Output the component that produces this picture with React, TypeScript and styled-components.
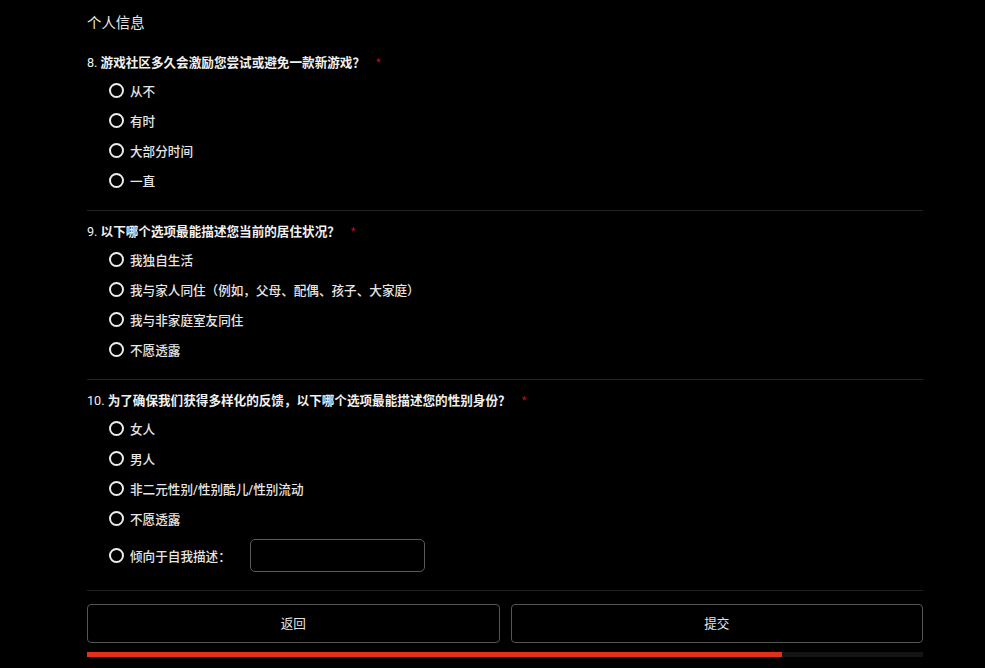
import { useState } from 'react';
import styled, { createGlobalStyle } from 'styled-components';

const GlobalStyle = createGlobalStyle`
	html, body {
		margin: 0;
		padding: 0;
		background: #000;
	}
	body {
		font-family: Roboto, 'Noto Sans CJK SC', sans-serif;
		color: #e4e4e4;
	}
`;

type Question = {
	id: number;
	text: string;
	options: string[];
	custom?: string;
};

const questions: Question[] = [
	{
		id: 8,
		text: '游戏社区多久会激励您尝试或避免一款新游戏？',
		options: ['从不', '有时', '大部分时间', '一直'],
	},
	{
		id: 9,
		text: '以下哪个选项最能描述您当前的居住状况？',
		options: ['我独自生活', '我与家人同住（例如，父母、配偶、孩子、大家庭）', '我与非家庭室友同住', '不愿透露'],
	},
	{
		id: 10,
		text: '为了确保我们获得多样化的反馈，以下哪个选项最能描述您的性别身份？',
		options: ['女人', '男人', '非二元性别/性别酷儿/性别流动', '不愿透露'],
		custom: '倾向于自我描述：',
	},
];

function App() {
	const [answers, setAnswers] = useState<Record<number, string>>({});
	const [selfText, setSelfText] = useState('');
	const progress = 83.1;

	const pick = (qid: number, value: string) => {
		setAnswers({ ...answers, [qid]: value });
	};

	return (
		<>
			<GlobalStyle />
			<Page>
				<Title>个人信息</Title>
				{questions.map((q, idx) => (
					<Section key={q.id} last={idx === questions.length - 1}>
						<QuestionText>
							<Num>{q.id}.</Num> {q.text}
							<Required>*</Required>
						</QuestionText>
						<OptionList>
							{q.options.map((opt) => (
								<Option key={opt} onClick={() => pick(q.id, opt)}>
									<Radio checked={answers[q.id] === opt} />
									{opt}
								</Option>
							))}
							{q.custom && (
								<CustomOption onClick={() => pick(q.id, 'self')}>
									<Radio checked={answers[q.id] === 'self'} />
									{q.custom}
									<SelfInput value={selfText} onChange={(e) => setSelfText(e.target.value)} />
								</CustomOption>
							)}
						</OptionList>
					</Section>
				))}
				<Buttons>
					<Button>返回</Button>
					<Button>提交</Button>
				</Buttons>
				<Track>
					<Fill style={{ width: `${progress}%` }} />
				</Track>
			</Page>
		</>
	);
}

const Page = styled.div`
	width: 836px;
	margin-left: 87px;
	padding-top: 14px;
`;

const Title = styled.div`
	font-size: 14.4px;
	line-height: 20px;
	margin-bottom: 8px;
	color: #e8e8e8;
`;

const Section = styled.section<{ last?: boolean }>`
	padding-top: 11px;
	padding-bottom: ${(props) => (props.last ? 13 : 15)}px;
	border-bottom: 1px solid #232323;
`;

const QuestionText = styled.div`
	font-size: 12.6px;
	line-height: 20px;
	font-weight: 700;
	color: #f0f0f0;
	margin-bottom: 2px;
`;

const Num = styled.span`
	font-weight: 400;
`;

const Required = styled.span`
	color: #b3122f;
	font-size: 11px;
	font-weight: 400;
	margin-left: 11px;
	vertical-align: 1px;
`;

const OptionList = styled.div`
	display: flex;
	flex-direction: column;
	padding-left: 22px;
`;

const Option = styled.label`
	display: flex;
	align-items: center;
	height: 30px;
	font-size: 12.6px;
	font-weight: 500;
	color: #e6e6e6;
	cursor: pointer;
`;

const CustomOption = styled(Option)`
	height: 44px;
`;

const Radio = styled.span<{ checked?: boolean }>`
	box-sizing: border-box;
	width: 15px;
	height: 15px;
	border-radius: 50%;
	border: 2px solid #ececec;
	margin-right: 6px;
	margin-top: 1px;
	flex-shrink: 0;
	background: ${(props) => (props.checked ? 'radial-gradient(circle, #ececec 0 3px, transparent 3.5px)' : 'transparent')};
`;

const SelfInput = styled.input`
	box-sizing: border-box;
	width: 175px;
	height: 33px;
	margin-left: 19px;
	background: #000;
	border: 1px solid #5a5a5a;
	border-radius: 5px;
	color: #e4e4e4;
	outline: none;
	font-family: inherit;
	padding: 0 8px;
`;

const Buttons = styled.div`
	display: grid;
	grid-template-columns: 1fr 1fr;
	gap: 11px;
	margin-top: 13px;
`;

const Button = styled.button`
	height: 39px;
	padding: 0 0 2px;
	background: #000;
	border: 1px solid #555;
	border-radius: 4px;
	color: #e6e6e6;
	font-family: inherit;
	font-size: 12.6px;
	cursor: pointer;
`;

const Track = styled.div`
	height: 5px;
	margin-top: 9px;
	background: #141414;
`;

const Fill = styled.div`
	height: 100%;
	background: #e3301a;
`;

export default App;
